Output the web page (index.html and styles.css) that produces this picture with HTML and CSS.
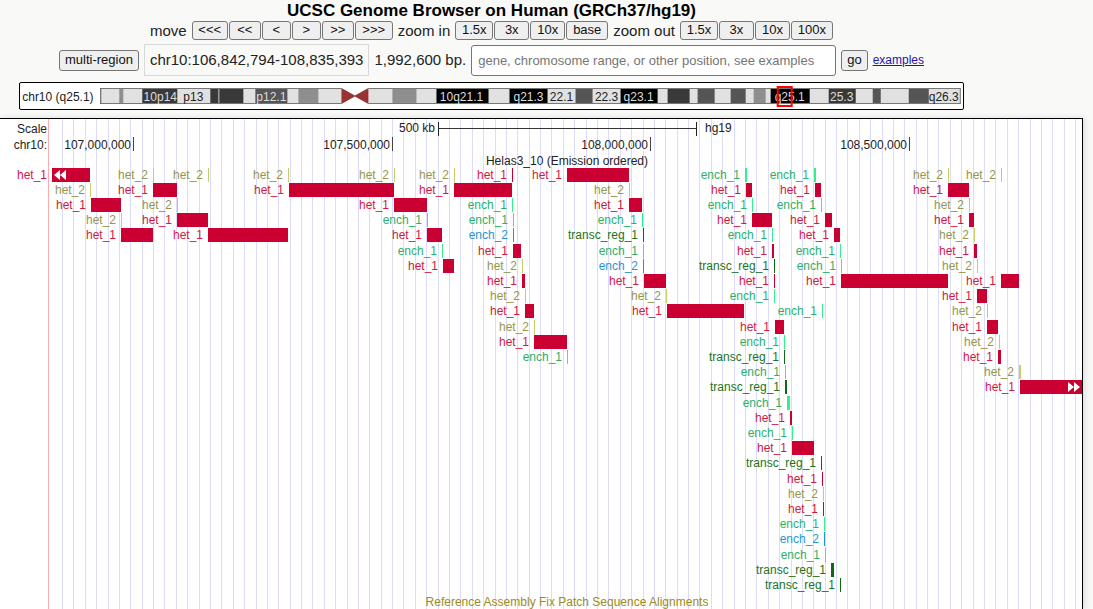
FILE: index.html
```html
<!DOCTYPE html>
<html lang="en">
<head>
<meta charset="utf-8">
<title>UCSC Genome Browser on Human (GRCh37/hg19)</title>
<link rel="stylesheet" href="styles.css">
</head>
<body>
<header class="controls">
  <h1 class="title">UCSC Genome Browser on Human (GRCh37/hg19)</h1>
  <div class="nav-row">
    <span>move</span>
    <div class="group">
      <button class="btn w36">&lt;&lt;&lt;</button>
      <button class="btn w32">&lt;&lt;</button>
      <button class="btn w29">&lt;</button>
      <button class="btn w29">&gt;</button>
      <button class="btn w32">&gt;&gt;</button>
      <button class="btn w38">&gt;&gt;&gt;</button>
    </div>
    <span>zoom in</span>
    <div class="group">
      <button class="btn w38">1.5x</button>
      <button class="btn w35">3x</button>
      <button class="btn w35">10x</button>
      <button class="btn w42">base</button>
    </div>
    <span>zoom out</span>
    <div class="group">
      <button class="btn w38">1.5x</button>
      <button class="btn w35">3x</button>
      <button class="btn w35">10x</button>
      <button class="btn w42">100x</button>
    </div>
  </div>
  <form class="search-row">
    <button type="button" class="btn tall">multi-region</button>
    <span class="position">chr10:106,842,794-108,835,393</span>
    <span class="size">1,992,600 bp.</span>
    <input class="search" type="text" aria-label="Position or search term" placeholder="gene, chromosome range, or other position, see examples">
    <button type="button" class="btn tall">go</button>
    <a class="examples" href="#examples">examples</a>
  </form>
  <div class="ideogram">
    <svg id="ideogram" viewBox="20 83 942 26" role="img" aria-label="Chromosome 10 ideogram"></svg>
  </div>
</header>
<main class="tracks">
  <svg id="tracks" viewBox="0 0 1082 490" role="img" aria-label="Genome tracks"></svg>
</main>
<script src="script.js"></script>
</body>
</html>
```
FILE: styles.css
```css
* { box-sizing: border-box; }
body {
  margin: 0;
  background: #f9f9f7;
  color: #222;
  font-family: "Liberation Sans", Arial, sans-serif;
  font-size: 15px;
}
.controls {
  display: flex;
  flex-direction: column;
  align-items: center;
  padding: 2px 110px 8px 0;
}
.title {
  margin: 0;
  font-size: 17px;
  line-height: 18px;
  color: #000;
}
.nav-row {
  display: flex;
  align-items: center;
  gap: 5px;
  height: 20px;
  white-space: nowrap;
}
.group { display: flex; gap: 1px; }
.btn {
  height: 19px;
  padding: 0;
  border: 1px solid #767676;
  border-radius: 3px;
  background: #efefef;
  color: #111;
  font: 13px/16px "Liberation Sans", Arial, sans-serif;
}
.w29 { width: 29px; }
.w32 { width: 32px; }
.w35 { width: 35px; }
.w36 { width: 36px; }
.w38 { width: 38px; }
.w42 { width: 42px; }
.search-row {
  display: flex;
  align-items: center;
  gap: 5px;
  margin: 4px 0 6px;
  white-space: nowrap;
}
.tall { height: 21px; padding: 0 5px; }
.position {
  padding: 5px;
  border: 1px solid #d8d8d8;
  line-height: 20px;
}
.size { line-height: 18px; }
.search {
  width: 365px;
  height: 31px;
  padding: 1px 6px;
  border: 1px solid #767676;
  border-radius: 3px;
  background: #fff;
  font: 13px "Liberation Sans", Arial, sans-serif;
}
.search::placeholder { color: #757575; }
.examples { font-size: 12px; color: #1a1aa6; }
.ideogram {
  width: 100%;
  max-width: 945px;
  border: 1px solid #000;
  border-radius: 2px;
  background: #fff;
}
.ideogram svg, .tracks svg { display: block; width: 100%; height: auto; }
.tracks {
  margin-right: 10px;
  border-top: 1px solid #000;
  border-right: 1px solid #000;
  background: #fff;
  box-shadow: 2px 0 6px #ddd;
}
svg text { font-family: "Liberation Sans", Arial, sans-serif; font-size: 12px; fill: #222; }
svg .end { text-anchor: end; }
svg .mid { text-anchor: middle; }
svg text.on-dark { fill: #ddd; }
svg .het_1 { fill: #cb0032; }
svg .het_2 { fill: #cccc66; }
svg .ench_1 { fill: #33f08f; }
svg .ench_2 { fill: #1e96cf; }
svg .transc_reg_1 { fill: #0a6b14; }
svg text.het_1 { fill: #d01844; }
svg text.het_2 { fill: #96964b; }
svg text.ench_1 { fill: #2bb06b; }
svg text.ench_2 { fill: #1e96cf; }
svg text.transc_reg_1 { fill: #1a7420; }
svg text.patch { fill: #9c8a24; }
```
FILE: script.js
```js
const NS = "http://www.w3.org/2000/svg";

function add(parent, tag, attrs, text) {
  const el = document.createElementNS(NS, tag);
  for (const key in attrs) el.setAttribute(key, attrs[key]);
  if (text) el.textContent = text;
  parent.appendChild(el);
}

function rect(parent, x, y, width, height, extra) {
  add(parent, "rect", { x, y, width, height, ...extra });
}

/* Chromosome ideogram: [start, end, stain] */
const ideogram = document.getElementById("ideogram");
const bands = [
  [119, 123, "#8e8e8e"], [142, 177, "#393939"], [210, 243, "#393939"],
  [255, 287, "#555"], [298, 318, "#8e8e8e"], [392, 416, "#8e8e8e"],
  [436, 488, "#000"], [509, 547, "#000"], [575, 592, "#555"],
  [620, 657, "#000"], [667, 689, "#393939"], [697, 714, "#555"],
  [730, 745, "#555"], [753, 765, "#8e8e8e"], [770, 809, "#000"],
  [828, 855, "#393939"], [872, 880, "#555"], [908, 928, "#555"]
];
add(ideogram, "text", { x: 22, y: 101 }, "chr10 (q25.1)");
rect(ideogram, 100, 88, 860, 16, { fill: "#e1e1e1" });
for (const [start, end, fill] of bands) rect(ideogram, start, 88, end - start, 16, { fill });
rect(ideogram, 218, 88, 1, 16, { fill: "#ccc" });
rect(ideogram, 100, 88, 860, 1, { fill: "#777" });
rect(ideogram, 100, 103, 860, 1, { fill: "#777" });
rect(ideogram, 100, 88, 1, 16, { fill: "#555" });
rect(ideogram, 959, 88, 1, 16, { fill: "#777" });
rect(ideogram, 341, 88, 27, 16, { fill: "#fff" });
add(ideogram, "path", { d: "M341 88L354.5 95.5L368 88V104L354.5 96.5L341 104Z", fill: "#993333" });
const bandLabels = [
  [160, "10p14", 1], [193, "p13", 0], [271, "p12.1", 1], [461, "10q21.1", 1],
  [528, "q21.3", 1], [561, "22.1", 0], [606, "22.3", 0], [638, "q23.1", 1],
  [789, "q25.1", 1], [841, "25.3", 1], [943, "q26.3", 0]
];
for (const [x, label, dark] of bandLabels)
  add(ideogram, "text", { x, y: 101, class: dark ? "mid on-dark" : "mid" }, label);
rect(ideogram, 777, 87, 14, 19, { fill: "none", stroke: "#f00", "stroke-width": 2 });

/* Guide lines, scale bar and coordinates */
const tracks = document.getElementById("tracks");
for (let i = 0; i < 90; i++)
  rect(tracks, Math.round(62 + i * 11.383), 0, 1, 490, { fill: "#dcdcfa" });
rect(tracks, 48, 0, 1, 490, { fill: "#ffabab" });
add(tracks, "text", { x: 47, y: 14, class: "end" }, "Scale");
add(tracks, "text", { x: 47, y: 30, class: "end" }, "chr10:");
add(tracks, "text", { x: 435, y: 13, class: "end" }, "500 kb");
add(tracks, "text", { x: 705, y: 13 }, "hg19");
rect(tracks, 438, 9, 259, 1, { fill: "#333" });
rect(tracks, 438, 3, 1, 14, { fill: "#222" });
rect(tracks, 696, 3, 1, 14, { fill: "#222" });
for (const [x, label] of [[133, "107,000,000"], [392, "107,500,000"], [650, "108,000,000"], [909, "108,500,000"]]) {
  rect(tracks, x, 18, 1, 14, { fill: "#444" });
  add(tracks, "text", { x: x - 2, y: 30, class: "end" }, label);
}
add(tracks, "text", { x: 567, y: 46, class: "mid" }, "Helas3_10 (Emission ordered)");

/* Items of each row: [type, start, width] */
const A = "het_1", B = "het_2", C = "ench_1", D = "ench_2", E = "transc_reg_1";
const rows = [
  [[A, 52, 38], [B, 153, 1], [B, 208, 1], [B, 288, 1], [B, 394, 1], [B, 454, 1], [A, 512, 1], [A, 567, 62], [C, 745, 2], [C, 814, 2], [B, 948, 1], [B, 1001, 1]],
  [[B, 90, 1], [A, 153, 24], [A, 289, 105], [A, 454, 58], [B, 629, 1], [A, 746, 6], [A, 815, 6], [A, 948, 21]],
  [[A, 91, 30], [B, 177, 1], [A, 394, 33], [C, 512, 1], [A, 629, 13], [C, 752, 1], [C, 821, 1], [B, 969, 1]],
  [[B, 121, 1], [A, 177, 31], [C, 427, 1], [C, 513, 1], [C, 642, 1], [A, 752, 20], [A, 825, 7], [A, 969, 5]],
  [[A, 121, 32], [A, 208, 80], [A, 427, 15], [D, 513, 1], [E, 643, 1], [C, 772, 1], [A, 834, 6], [B, 974, 1]],
  [[C, 442, 1], [A, 513, 8], [C, 643, 1], [A, 772, 2], [C, 840, 1], [A, 974, 3]],
  [[A, 443, 11], [B, 522, 1], [D, 643, 1], [E, 774, 1], [C, 841, 1], [B, 977, 1]],
  [[A, 522, 3], [A, 644, 22], [A, 774, 1], [A, 841, 107], [A, 1001, 18]],
  [[B, 525, 1], [B, 666, 1], [C, 774, 1], [A, 977, 10]],
  [[A, 525, 9], [A, 667, 77], [C, 822, 1], [B, 987, 1]],
  [[B, 534, 1], [A, 775, 9], [A, 987, 11]],
  [[A, 534, 33], [C, 784, 1], [B, 999, 1]],
  [[C, 567, 1], [E, 784, 1], [A, 998, 3]],
  [[C, 785, 1], [B, 1019, 2]],
  [[E, 785, 2], [A, 1020, 62]],
  [[C, 787, 3]], [[A, 790, 2]], [[C, 792, 1]], [[A, 792, 22]], [[E, 821, 1]],
  [[A, 822, 1]], [[B, 823, 1]], [[A, 823, 1]], [[C, 824, 1]], [[D, 824, 1]],
  [[C, 825, 1]], [[E, 831, 3]], [[E, 840, 1]]
];
rows.forEach((items, row) => {
  const top = Math.floor(49 + row * 15.2);
  for (const [type, x, width] of items) {
    rect(tracks, x, top, width, 14, { class: type });
    add(tracks, "text", { x: x - 5, y: top + 11, class: type + " end" }, type);
  }
});
add(tracks, "path", { d: "M60 51L54 56L60 61ZM66 51L60 56L66 61Z", fill: "#fff" });
add(tracks, "path", { d: "M1068 263L1074 268L1068 273ZM1074 263L1080 268L1074 273Z", fill: "#fff" });
add(tracks, "text", { x: 567, y: 487, class: "mid patch" }, "Reference Assembly Fix Patch Sequence Alignments");
```
